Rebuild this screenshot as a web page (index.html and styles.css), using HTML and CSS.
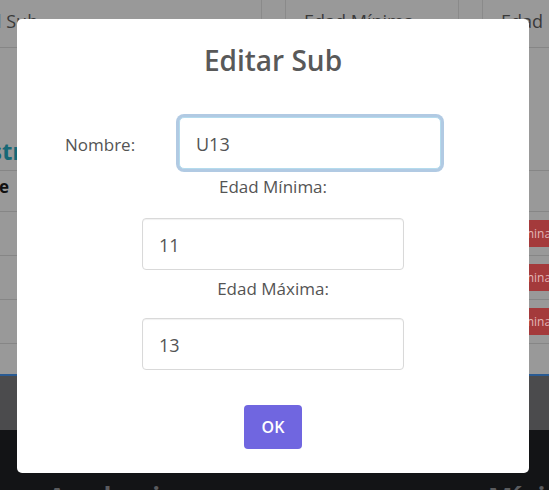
FILE: index.html
```html
<!DOCTYPE html>
<html lang="es">
<head>
<meta charset="utf-8">
<title>Editar Sub</title>
<link rel="stylesheet" href="styles.css">
</head>
<body>
<div class="page">
  <div class="thead-top">
    <div class="th th-name"><span class="clip-left">l Sub</span></div>
    <div class="th th-narrow"></div>
    <div class="th th-mid">Edad Mínima</div>
    <div class="th th-narrow"></div>
    <div class="th th-rest">Edad Máxima</div>
  </div>
  <div class="section">
    <h2 class="section-title">str</h2>
  </div>
  <div class="table">
    <div class="tr tr-head"><span class="th-bold">e</span></div>
    <div class="tr"><span class="btn-del">Eliminar</span></div>
    <div class="tr"><span class="btn-del">Eliminar</span></div>
    <div class="tr"><span class="btn-del">Eliminar</span></div>
  </div>
  <div class="spacer"></div>
  <div class="band"></div>
  <div class="footer">
    <span class="foot-text">Academia</span>
    <span class="foot-text">Mínima</span>
  </div>
</div>

<div class="overlay">
  <div class="modal" role="dialog">
    <h1 class="modal-title">Editar Sub</h1>
    <div class="field-row">
      <label class="row-label">Nombre:</label>
      <input class="swal-input focused" type="text" value="U13">
    </div>
    <label class="stack-label first">Edad Mínima:</label>
    <input class="swal-input" type="text" value="11">
    <label class="stack-label second">Edad Máxima:</label>
    <input class="swal-input" type="text" value="13">
    <button class="confirm" type="button">OK</button>
  </div>
</div>
</body>
</html>
```

FILE: styles.css
```css
* { box-sizing: border-box; }

html, body {
  margin: 0;
  padding: 0;
  width: 549px;
  height: 490px;
  overflow: hidden;
}

body {
  font-family: "Open Sans", "Liberation Sans", sans-serif;
  background: #131416;
  position: relative;
}

.page {
  width: 549px;
  height: 490px;
  background: #999999;
  display: flex;
  flex-direction: column;
  overflow: hidden;
}

/* top table header */
.thead-top {
  display: flex;
  height: 48px;
  flex: 0 0 48px;
  border-bottom: 1px solid #868686;
}
.th {
  font-size: 18px;
  color: #3a3a3a;
  padding-top: 9px;
  line-height: 24px;
  white-space: nowrap;
  overflow: hidden;
  border-right: 1px solid #8a8a8a;
}
.th-name { width: 262px; flex: 0 0 262px; }
.clip-left { display: inline-block; margin-left: -3px; }
.th-narrow { width: 24px; flex: 0 0 24px; }
.th-mid { width: 173px; flex: 0 0 173px; padding-left: 18px; }
.th-rest { flex: 1; padding-left: 18px; border-right: none; }

.section {
  height: 122px;
  flex: 0 0 122px;
  display: flex;
  align-items: flex-end;
}
.section-title {
  margin: 0 0 4px -10px;
  font-size: 24px;
  font-weight: 700;
  color: #176876;
  line-height: 30px;
}

.table {
  border-top: 1px solid #868686;
}
.tr {
  height: 44px;
  border-bottom: 1px solid #868686;
  display: flex;
  align-items: center;
  justify-content: flex-end;
}
.tr-head {
  height: 41px;
  justify-content: flex-start;
}
.th-bold {
  font-weight: 700;
  font-size: 17px;
  color: #111;
  margin-left: -1px;
  margin-top: -9px;
}
.btn-del {
  background: #a43a3b;
  color: #e2b5b5;
  font-size: 12px;
  line-height: 27px;
  height: 27px;
  padding: 0 8px;
  border-radius: 3px;
  margin-right: -15px;
}

.spacer {
  height: 32px;
  flex: 0 0 32px;
  border-bottom: 2px solid #2a5b93;
}
.band {
  height: 54px;
  flex: 0 0 54px;
  background: #4b4b4d;
}
.footer {
  flex: 1;
  background: #131416;
  display: grid;
  grid-template-columns: 440px 1fr;
  padding: 52px 0 0 48px;
  overflow: hidden;
}
.foot-text {
  font-size: 26px;
  font-weight: 700;
  color: #5a5b5e;
  line-height: 30px;
  white-space: nowrap;
}

/* modal */
.overlay {
  position: absolute;
  inset: 0;
}
.modal {
  position: absolute;
  left: 17px;
  top: 19px;
  width: 512px;
  height: 454px;
  background: #ffffff;
  border-radius: 5px;
  padding: 23px 0 24px;
  display: flex;
  flex-direction: column;
  align-items: center;
}
.modal-title {
  margin: 0;
  font-size: 28px;
  font-weight: 600;
  line-height: 36px;
  color: #595959;
}

.field-row {
  align-self: stretch;
  display: flex;
  align-items: center;
  margin-top: 39px;
  padding-left: 48px;
}
.row-label {
  flex: 0 0 114px;
  font-size: 17px;
  color: #545454;
  line-height: 24px;
  padding-top: 4px;
}

.swal-input {
  width: 262px;
  height: 52px;
  border: 1px solid #d9d9d9;
  border-radius: 4px;
  padding: 2px 16px 0;
  font-family: inherit;
  font-size: 18px;
  color: #545454;
  background: #fff;
  outline: none;
  box-shadow: inset 0 1px 1px rgba(0, 0, 0, 0.06);
}
.swal-input.focused {
  border-color: #b4dbed;
  border-radius: 5px;
  box-shadow: 0 0 0 3px rgba(100, 150, 200, 0.5);
}

.stack-label {
  font-size: 17px;
  line-height: 24px;
  color: #545454;
}
.stack-label.first { margin: 6px 0 19px; }
.stack-label.second { margin: 7px 0 17px; }

.confirm {
  margin-top: 35px;
  height: 44px;
  padding: 0 18px;
  border: 0;
  border-radius: 4px;
  background: #7066e0;
  color: #fff;
  font-family: inherit;
  font-size: 16px;
  font-weight: 600;
}
```
